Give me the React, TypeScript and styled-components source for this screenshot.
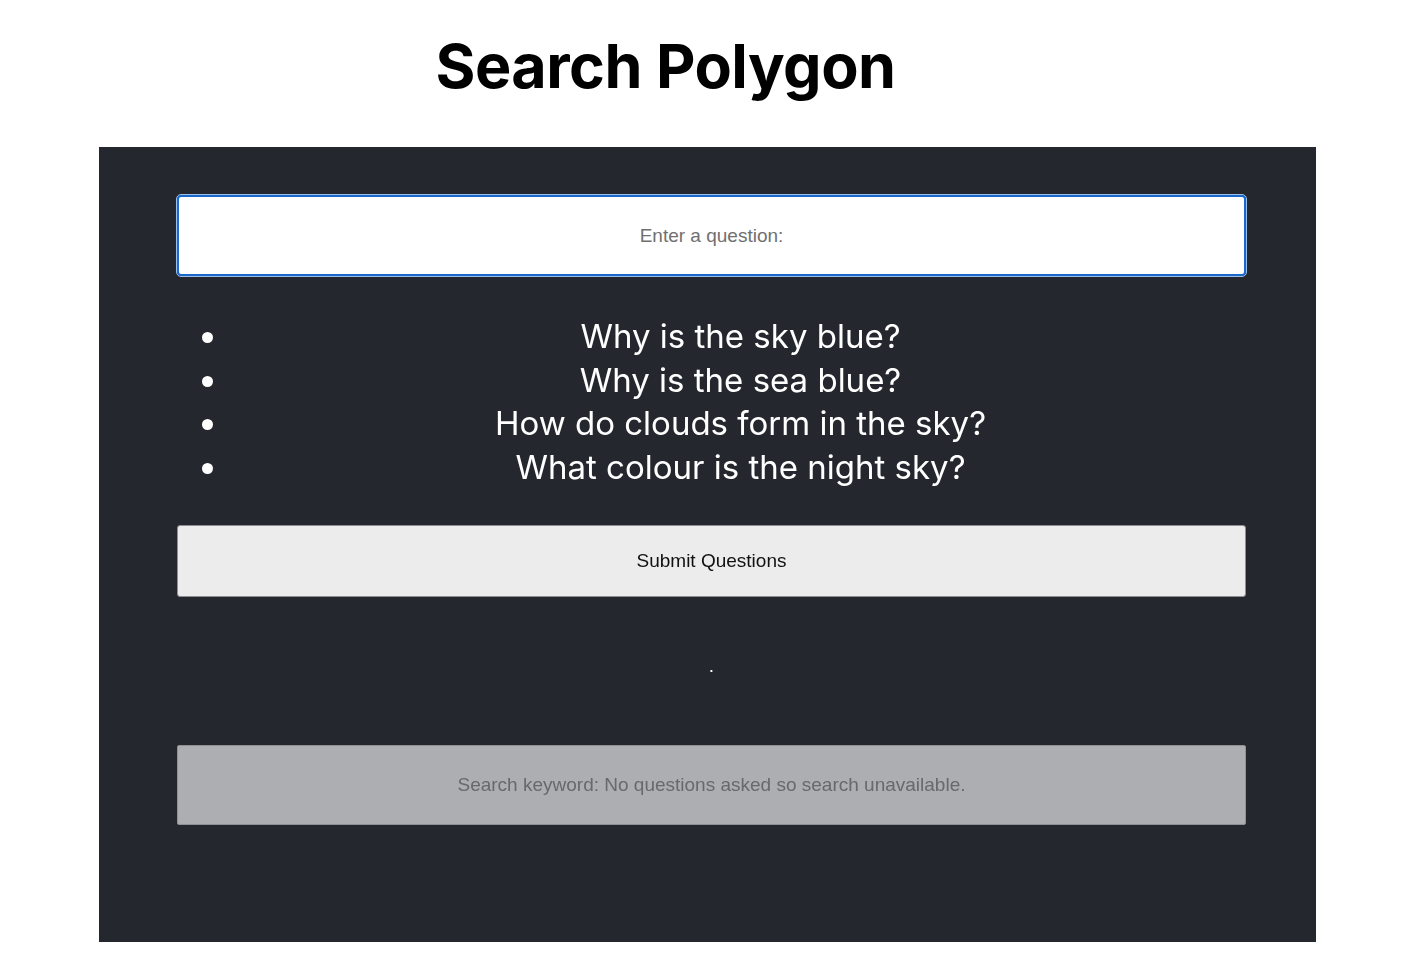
import React from "react";
import styled, { createGlobalStyle } from "styled-components";

const Global = createGlobalStyle`
  html, body { margin: 0; padding: 0; background: #ffffff; }
  body { font-family: "Liberation Sans", Arial, sans-serif; }
`;

const Page = styled.div`
  width: 1403px;
  height: 979px;
  display: flex;
  flex-direction: column;
`;

const Header = styled.header`
  height: 147px;
  display: flex;
  align-items: flex-start;
  justify-content: center;
  padding-right: 72px;
  box-sizing: border-box;
`;

const Title = styled.h1`
  margin: 29px 0 0;
  font-family: "Inter", "Liberation Sans", sans-serif;
  font-weight: 700;
  font-size: 61px;
  line-height: 74px;
  color: #000;
  letter-spacing: -0.5px;
`;

const Panel = styled.main`
  margin-left: 99px;
  width: 1217px;
  height: 795px;
  background: #24272e;
  box-sizing: border-box;
  padding: 48px 70px 0 78px;
  display: flex;
  flex-direction: column;
`;

const QuestionInput = styled.input`
  height: 81px;
  width: 100%;
  box-sizing: border-box;
  border: 2px solid #1a66c9;
  border-radius: 4px;
  background: #ffffff;
  outline: 1px solid #9cc0ee;
  text-align: center;
  font-family: "Liberation Sans", Arial, sans-serif;
  font-size: 19px;
  color: #222;
  caret-color: #000;
  &::placeholder { color: #707070; }
`;

const QuestionList = styled.ul`
  margin: 39px -5px 0 0;
  padding: 0 0 0 53px;
  list-style: disc outside;
  color: #ffffff;
  font-family: "Inter", "Liberation Sans", sans-serif;
  font-weight: 400;
  font-size: 33px;
  line-height: 43.6px;
`;

const QuestionItem = styled.li`
  text-align: center;
`;

const SubmitButton = styled.button`
  margin-top: 36px;
  height: 72px;
  width: 100%;
  border: 1px solid #8d8f92;
  border-radius: 3px;
  background: #ececec;
  font-family: "Liberation Sans", Arial, sans-serif;
  font-size: 19px;
  color: #111;
`;

const Status = styled.div`
  height: 148px;
  display: flex;
  align-items: center;
  justify-content: center;
  color: #ffffff;
  font-family: "Liberation Sans", Arial, sans-serif;
  font-size: 19px;
  padding-bottom: 10px;
  box-sizing: border-box;
`;

const KeywordBox = styled.div`
  height: 80px;
  width: 100%;
  box-sizing: border-box;
  border: 1px solid #8e9094;
  border-radius: 2px;
  background: #acaeb1;
  display: flex;
  align-items: center;
  justify-content: center;
  font-family: "Liberation Sans", Arial, sans-serif;
  font-size: 19px;
  color: #67696c;
`;

const questions = [
  "Why is the sky blue?",
  "Why is the sea blue?",
  "How do clouds form in the sky?",
  "What colour is the night sky?",
];

export default function App() {
  return (
    <Page>
      <Global />
      <Header>
        <Title>Search Polygon</Title>
      </Header>
      <Panel>
        <QuestionInput placeholder="Enter a question:" autoFocus />
        <QuestionList>
          {questions.map((q) => (
            <QuestionItem key={q}>{q}</QuestionItem>
          ))}
        </QuestionList>
        <SubmitButton>Submit Questions</SubmitButton>
        <Status>.</Status>
        <KeywordBox>Search keyword: No questions asked so search unavailable.</KeywordBox>
      </Panel>
    </Page>
  );
}
